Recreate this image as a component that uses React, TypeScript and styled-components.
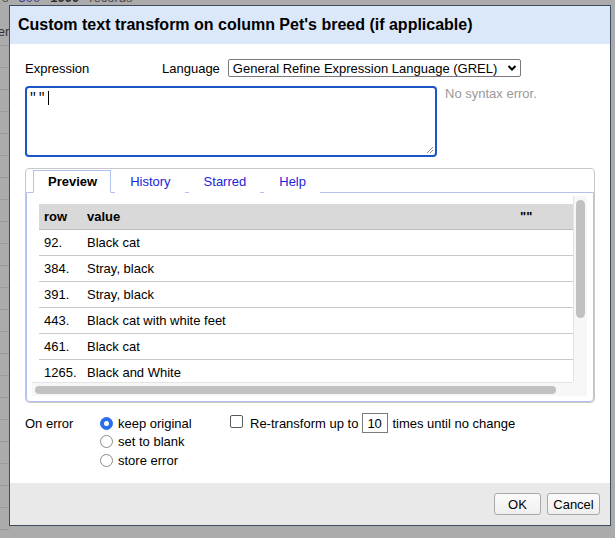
import React from "react";
import styled, { createGlobalStyle } from "styled-components";

const Global = createGlobalStyle`
  html, body { margin: 0; padding: 0; }
  body {
    font-family: "Liberation Sans", Arial, sans-serif;
    font-size: 13px;
    color: #000;
    background: #ababab;
  }
  * { box-sizing: border-box; }
`;

const Page = styled.div`
  position: relative;
  width: 615px;
  height: 538px;
  overflow: hidden;
  background: #ababab;
`;

const Backdrop = styled.div`
  display: flex;
  flex-direction: column;
  height: 100%;
`;

const BackTop = styled.div`
  display: flex;
  gap: 10px;
  margin-top: -9px;
  padding-left: 2px;
  height: 14px;
  font-size: 13px;
  line-height: 14px;
  color: #4b4b4b;
`;

const BackLink = styled.span<{ $bold?: boolean }>`
  color: ${(p) => (p.$bold ? "#2a2a2a" : "#3d3d8f")};
  font-weight: ${(p) => (p.$bold ? 700 : 400)};
`;

const BackLeft = styled.div`
  margin-top: 19px;
  width: 9px;
  flex: 1;
  overflow: hidden;
  font-size: 13px;
  color: #333;
  background: repeating-linear-gradient(
    to bottom,
    transparent 0,
    transparent 21px,
    #9a9a9a 21px,
    #9a9a9a 22px
  );
`;

const BackLabel = styled.div`
  margin-left: -24px;
  margin-bottom: 30px;
  background: #ababab;
  line-height: 15px;
  white-space: nowrap;
`;

const Dialog = styled.div`
  position: absolute;
  left: 9px;
  top: 5px;
  width: 602px;
  height: 521px;
  border: 1px solid #3e4c61;
  background: #fff;
  display: flex;
  flex-direction: column;
`;

const Header = styled.div`
  height: 38px;
  background: #dbe8f9;
  display: flex;
  align-items: center;
  padding-left: 8px;
  font-size: 16px;
  font-weight: 700;
  color: #000;
`;

const Body = styled.div`
  flex: 1;
  padding: 15px 0 0 15px;
  display: flex;
  flex-direction: column;
`;

const ExprRow = styled.div`
  display: flex;
  align-items: center;
  height: 18px;
`;

const ExprLabel = styled.div`
  width: 137px;
`;

const LangLabel = styled.div`
  margin-right: 8px;
`;

const SelectBox = styled.div`
  width: 293px;
  height: 18px;
  border: 1px solid #7a7a7a;
  border-radius: 2px;
  display: flex;
  align-items: center;
  justify-content: space-between;
  padding: 0 3px 0 4px;
  font-size: 13px;
  background: #fff;
`;

const EditorRow = styled.div`
  display: flex;
  align-items: flex-start;
  margin-top: 9px;
`;

const EditorBox = styled.div`
  position: relative;
  width: 412px;
  height: 71px;
  border: 2px solid #1c55c6;
  border-radius: 4px;
  padding: 2px 2px;
  font-family: "Liberation Mono", "Courier New", monospace;
  font-size: 13px;
  line-height: 15px;
  letter-spacing: 1px;
  display: flex;
  align-items: flex-start;
`;

const Caret = styled.span`
  display: inline-block;
  width: 1px;
  height: 14px;
  margin-top: 1px;
  margin-left: 1px;
  background: #000;
`;

const Grip = styled.svg`
  position: absolute;
  right: 1px;
  bottom: 1px;
`;

const Status = styled.div`
  margin-left: 8px;
  color: #9a9a9a;
  line-height: 15px;
`;

const TabsFrame = styled.div`
  margin-top: 11px;
  width: 570px;
  height: 235px;
  border: 1px solid #c8c8c8;
  border-radius: 4px;
  display: flex;
  flex-direction: column;
  padding-top: 1px;
`;

const TabBar = styled.div`
  display: flex;
  gap: 4px;
  padding-left: 7px;
  position: relative;
  z-index: 1;
`;

const Tab = styled.div<{ $active?: boolean }>`
  height: 23px;
  padding: 0 13px 0 14px;
  display: flex;
  align-items: center;
  font-size: 13px;
  border: 1px solid ${(p) => (p.$active ? "#b3c1ee" : "transparent")};
  border-bottom: 1px solid ${(p) => (p.$active ? "#fff" : "transparent")};
  background: #fff;
  color: ${(p) => (p.$active ? "#000" : "#2323d6")};
  font-weight: ${(p) => (p.$active ? 700 : 400)};
`;

const Panel = styled.div`
  margin-top: -1px;
  flex: 1;
  border: 1px solid #b3c1ee;
  border-radius: 0 0 4px 4px;
  padding: 3px 6px 4px 5px;
`;

const ScrollBox = styled.div`
  display: grid;
  grid-template-columns: 541px 14px;
  grid-template-rows: 186px 14px;
  background: #fff;
`;

const Viewport = styled.div`
  overflow: hidden;
  padding: 8px 0 0 7px;
`;

const VTrack = styled.div`
  background: #f7f7f7;
  border-left: 1px solid #e4e4e4;
  padding: 4px 2px 0 2px;
`;

const VThumb = styled.div`
  width: 9px;
  height: 118px;
  border-radius: 5px;
  background: #c1c1c1;
`;

const HTrack = styled.div`
  background: #f7f7f7;
  border-top: 1px solid #e4e4e4;
  padding: 3px 0 0 3px;
`;

const HThumb = styled.div`
  width: 521px;
  height: 8px;
  border-radius: 4px;
  background: #c1c1c1;
`;

const Corner = styled.div`
  background: #f7f7f7;
`;

const Table = styled.table`
  width: 534px;
  border-collapse: collapse;
  table-layout: fixed;
  font-size: 13px;
`;

const Th = styled.th<{ $w?: number }>`
  width: ${(p) => (p.$w ? `${p.$w}px` : "auto")};
  height: 25px;
  padding: 0 0 0 5px;
  text-align: left;
  font-weight: 700;
  background: #d9d9d9;
  border-bottom: 1px solid #bdbdbd;
`;

const Td = styled.td`
  height: 26px;
  padding: 0 0 0 5px;
  border-bottom: 1px solid #cacaca;
  white-space: nowrap;
`;

const OptionsRow = styled.div`
  display: flex;
  align-items: flex-start;
  margin-top: 11px;
`;

const OptLabel = styled.div`
  width: 75px;
  line-height: 19px;
`;

const RadioGroup = styled.div`
  width: 130px;
  display: flex;
  flex-direction: column;
`;

const RadioItem = styled.label`
  display: flex;
  align-items: center;
  gap: 5px;
  height: 18.5px;
`;

const RadioDot = styled.span<{ $on?: boolean }>`
  width: 13px;
  height: 13px;
  border-radius: 50%;
  border: 1px solid ${(p) => (p.$on ? "#2b6ef0" : "#8a8a8a")};
  background: ${(p) => (p.$on ? "#2b6ef0" : "#fff")};
  display: flex;
  align-items: center;
  justify-content: center;
  &::after {
    content: "";
    width: 5px;
    height: 5px;
    border-radius: 50%;
    background: ${(p) => (p.$on ? "#fff" : "transparent")};
  }
`;

const RepeatRow = styled.div`
  display: flex;
  align-items: center;
  height: 20px;
  margin-top: -1px;
`;

const CheckBox = styled.span`
  width: 13px;
  height: 13px;
  border: 1px solid #5a5a5a;
  border-radius: 2px;
  background: #fff;
  margin-right: 7px;
  margin-top: -3px;
`;

const CountBox = styled.span`
  width: 26px;
  height: 20px;
  border: 1px solid #7a7a7a;
  margin: 0 4px;
  display: flex;
  align-items: center;
  padding-left: 4px;
  font-size: 13px;
`;

const Footer = styled.div`
  height: 42px;
  background: #e9e9e9;
  display: flex;
  align-items: center;
  justify-content: flex-end;
  gap: 6px;
  padding-right: 10px;
`;

const Button = styled.button<{ $w: number }>`
  width: ${(p) => p.$w}px;
  height: 22px;
  font-family: "Liberation Sans", Arial, sans-serif;
  font-size: 13px;
  color: #000;
  border: 1px solid #a9a9a9;
  border-radius: 3px;
  background: linear-gradient(#fbfbfb, #efefef);
  padding: 0;
`;

const rows: [string, string][] = [
  ["92.", "Black cat"],
  ["384.", "Stray, black"],
  ["391.", "Stray, black"],
  ["443.", "Black cat with white feet"],
  ["461.", "Black cat"],
  ["1265.", "Black and White"],
  ["1300.", "Black"],
];

export default function App() {
  return (
    <>
      <Global />
      <Page>
        <Backdrop>
          <BackTop>
            <span>s</span>
            <BackLink>500</BackLink>
            <BackLink $bold>1000</BackLink>
            <span>records</span>
          </BackTop>
          <BackLeft>
            <BackLabel>Order</BackLabel>
          </BackLeft>
        </Backdrop>
        <Dialog>
          <Header>Custom text transform on column Pet's breed (if applicable)</Header>
          <Body>
            <ExprRow>
              <ExprLabel>Expression</ExprLabel>
              <LangLabel>Language</LangLabel>
              <SelectBox>
                <span>General Refine Expression Language (GREL)</span>
                <svg width="10" height="8" viewBox="0 0 10 8">
                  <path d="M1.5 2 L5 5.5 L8.5 2" fill="none" stroke="#000" strokeWidth="2" />
                </svg>
              </SelectBox>
            </ExprRow>
            <EditorRow>
              <EditorBox>
                <span>""</span>
                <Caret />
                <Grip width="9" height="9" viewBox="0 0 9 9">
                  <path d="M8 2 L2 8 M8 5 L5 8" stroke="#8a8a8a" strokeWidth="1" />
                </Grip>
              </EditorBox>
              <Status>No syntax error.</Status>
            </EditorRow>
            <TabsFrame>
              <TabBar>
                <Tab $active>Preview</Tab>
                <Tab>History</Tab>
                <Tab>Starred</Tab>
                <Tab>Help</Tab>
              </TabBar>
              <Panel>
                <ScrollBox>
                  <Viewport>
                    <Table>
                      <thead>
                        <tr>
                          <Th $w={43}>row</Th>
                          <Th $w={433}>value</Th>
                          <Th>""</Th>
                        </tr>
                      </thead>
                      <tbody>
                        {rows.map(([n, v]) => (
                          <tr key={n}>
                            <Td>{n}</Td>
                            <Td>{v}</Td>
                            <Td></Td>
                          </tr>
                        ))}
                      </tbody>
                    </Table>
                  </Viewport>
                  <VTrack>
                    <VThumb />
                  </VTrack>
                  <HTrack>
                    <HThumb />
                  </HTrack>
                  <Corner />
                </ScrollBox>
              </Panel>
            </TabsFrame>
            <OptionsRow>
              <OptLabel>On error</OptLabel>
              <RadioGroup>
                <RadioItem>
                  <RadioDot $on />
                  keep original
                </RadioItem>
                <RadioItem>
                  <RadioDot />
                  set to blank
                </RadioItem>
                <RadioItem>
                  <RadioDot />
                  store error
                </RadioItem>
              </RadioGroup>
              <RepeatRow>
                <CheckBox />
                Re-transform up to
                <CountBox>10</CountBox>
                times until no change
              </RepeatRow>
            </OptionsRow>
          </Body>
          <Footer>
            <Button $w={47}>OK</Button>
            <Button $w={53}>Cancel</Button>
          </Footer>
        </Dialog>
      </Page>
    </>
  );
}
